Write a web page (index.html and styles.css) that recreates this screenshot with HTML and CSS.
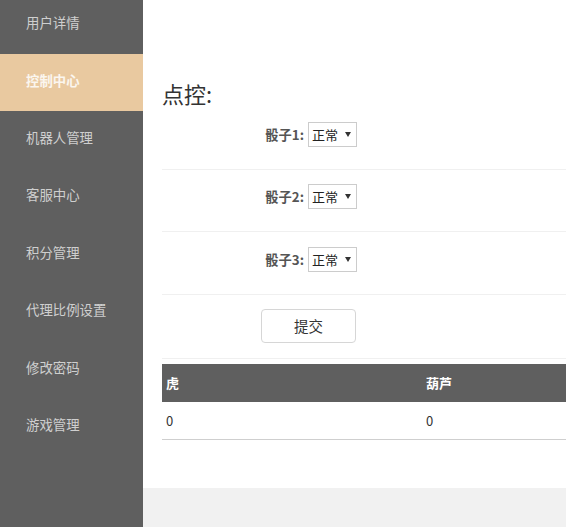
FILE: index.html
```html
<!DOCTYPE html>
<html lang="zh-CN">
<head>
<meta charset="utf-8">
<title>控制中心</title>
<link rel="stylesheet" href="styles.css">
</head>
<body>
<div class="layout">
  <nav class="sidebar">
    <ul class="menu">
      <li class="menu-item">用户详情</li>
      <li class="menu-item active">控制中心</li>
      <li class="menu-item">机器人管理</li>
      <li class="menu-item">客服中心</li>
      <li class="menu-item">积分管理</li>
      <li class="menu-item">代理比例设置</li>
      <li class="menu-item">修改密码</li>
      <li class="menu-item">游戏管理</li>
    </ul>
  </nav>
  <main class="main">
    <section class="panel">
      <h2 class="title">点控:</h2>
      <div class="form-row">
        <label class="label">骰子1:</label>
        <div class="select-wrap"><select class="select"><option>正常</option></select></div>
      </div>
      <div class="form-row">
        <label class="label">骰子2:</label>
        <div class="select-wrap"><select class="select"><option>正常</option></select></div>
      </div>
      <div class="form-row">
        <label class="label">骰子3:</label>
        <div class="select-wrap"><select class="select"><option>正常</option></select></div>
      </div>
      <div class="button-row">
        <button class="btn" type="button">提交</button>
      </div>
      <table class="table">
        <thead>
          <tr><th>虎</th><th>葫芦</th></tr>
        </thead>
        <tbody>
          <tr><td>0</td><td>0</td></tr>
        </tbody>
      </table>
    </section>
    <div class="footer-area"></div>
  </main>
</div>
</body>
</html>
```
FILE: styles.css
```css
* { box-sizing: border-box; }
html, body {
  margin: 0;
  padding: 0;
  height: 100%;
  overflow: hidden;
}
body {
  font-family: "Noto Sans CJK SC", "Liberation Sans", sans-serif;
  font-size: 13px;
  color: #333;
  background: #fff;
}
.layout {
  display: flex;
  height: 527px;
}
.sidebar {
  width: 143px;
  flex: 0 0 143px;
  background: #5f5f5f;
  overflow: hidden;
}
.menu {
  list-style: none;
  margin: -3.4px 0 0 0;
  padding: 0;
}
.menu-item {
  height: 57.4px;
  display: flex;
  align-items: center;
  padding-left: 26px;
  padding-bottom: 6px;
  font-size: 13.4px;
  color: #cfcfcf;
}
.menu-item.active {
  background: #e9c9a0;
  color: #fbf6ef;
  font-weight: bold;
}
.main {
  flex: 1;
  display: flex;
  flex-direction: column;
  overflow: hidden;
  min-width: 0;
}
.panel {
  height: 488px;
  flex: 0 0 488px;
  background: #fff;
  padding: 81px 0 0 19px;
  overflow: hidden;
}
.footer-area {
  flex: 1;
  background: #f1f1f1;
}
.title {
  margin: 0;
  font-size: 22px;
  font-weight: normal;
  line-height: 25px;
  height: 26px;
  color: #333;
}
.form-row {
  display: flex;
  align-items: center;
  height: 62.5px;
  padding-top: 15px;
  padding-bottom: 22px;
  border-bottom: 1px solid #f0f0f0;
  width: 520px;
}
.label {
  width: 146px;
  text-align: right;
  padding-right: 4px;
  font-weight: bold;
  color: #555;
  font-size: 13.3px;
}
.select-wrap {
  position: relative;
  width: 49px;
  height: 25px;
}
.select-wrap::after {
  content: "";
  position: absolute;
  right: 6px;
  top: 10px;
  width: 0;
  height: 0;
  border-left: 3.5px solid transparent;
  border-right: 3.5px solid transparent;
  border-top: 5px solid #333;
  pointer-events: none;
}
.select {
  appearance: none;
  -webkit-appearance: none;
  width: 49px;
  height: 25px;
  border: 1px solid #cccccc;
  border-radius: 0;
  background: #fff;
  padding: 0 0 0 3px;
  font-family: "Noto Sans CJK SC", "Liberation Sans", sans-serif;
  font-size: 13px;
  color: #222;
}
.button-row {
  height: 64px;
  padding-top: 14px;
  border-bottom: 1px solid #f0f0f0;
  width: 520px;
}
.btn {
  margin-left: 99px;
  width: 95px;
  height: 34px;
  border: 1px solid #d6d6d6;
  border-radius: 4px;
  background: #fff;
  font-family: "Noto Sans CJK SC", "Liberation Sans", sans-serif;
  font-size: 14.5px;
  color: #333;
}
.table {
  margin-top: 5px;
  width: 520px;
  border-collapse: collapse;
  table-layout: fixed;
}
.table th {
  background: #5f5f5f;
  color: #fff;
  font-weight: bold;
  text-align: left;
  height: 38px;
  padding: 0 4px;
  font-size: 13px;
}
.table td {
  height: 38px;
  padding: 0 4px;
  border-bottom: 1px solid #cfcfcf;
  font-size: 13px;
  color: #333;
}
```
